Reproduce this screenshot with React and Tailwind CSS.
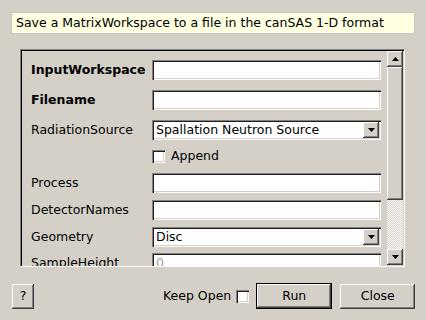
import React from 'react'

const raised = 'shadow-[inset_-1px_-1px_0_#404040,inset_1px_1px_0_#ffffff,inset_-2px_-2px_0_#808080]'
const sunken = 'shadow-[inset_1px_1px_0_#808080,inset_2px_2px_0_#202020,inset_-1px_-1px_0_#ffffff,inset_-2px_-2px_0_#d4d0c8]'

const Arrow = ({ up }) => (
  <svg width="7" height="4" viewBox="0 0 7 4">
    <path d={up ? 'M3.5 0 L7 4 L0 4 Z' : 'M0 0 L7 0 L3.5 4 Z'} fill="#000" />
  </svg>
)

const TextBox = ({ value, muted }) => (
  <div className={`w-[229px] h-[20px] bg-white ${sunken} flex items-center pl-[4px] ${muted ? 'text-[#a0a0a0]' : 'text-black'}`}>
    {value}
  </div>
)

const Combo = ({ value }) => (
  <div className={`w-[229px] h-[20px] bg-white ${sunken} flex items-center pl-[4px] pr-[2px]`}>
    <span className="flex-1">{value}</span>
    <div className={`w-[16px] h-[16px] bg-[#d4d0c8] ${raised} flex items-center justify-center`}>
      <Arrow />
    </div>
  </div>
)

const Row = ({ label, bold, children, className }) => (
  <div className={`flex items-center h-[20px] ${className}`}>
    <span className={`w-[121px] ${bold ? 'font-bold' : ''}`}>{label}</span>
    {children}
  </div>
)

const CheckBox = () => (
  <div className={`w-[13px] h-[13px] bg-white ${sunken}`} />
)

const Button = ({ label, className, isDefault }) => (
  <div className={`h-[25px] bg-[#d4d0c8] flex items-center justify-center ${isDefault ? 'border border-black' : ''} ${className}`}>
    <div className={`w-full h-full flex items-center justify-center ${raised}`}>{label}</div>
  </div>
)

export default function App() {
  return (
    <div className="w-[426px] h-[320px] bg-[#d4d0c8] text-[12.5px] text-black flex flex-col overflow-hidden" style={{ fontFamily: '"DejaVu Sans", sans-serif' }}>
      <div className="mx-[11px] mt-[12px] w-[404px] h-[22px] bg-[#ffffe1] border border-[#c8c8c0] flex items-center pl-[4px]">
        Save a MatrixWorkspace to a file in the canSAS 1-D format
      </div>

      <div className="ml-[20px] mt-[15px] w-[385px] h-[218px] border-t border-l border-[#808080] border-b border-r border-b-white border-r-white">
        <div className="w-full h-full border-t border-l border-black flex">
          <div className="flex-1 overflow-hidden pl-[9px] pt-[9px]">
            <Row label="InputWorkspace" bold><TextBox /></Row>
            <Row label="Filename" bold className="mt-[10px]"><TextBox /></Row>
            <Row label="RadiationSource" className="mt-[10px]"><Combo value="Spallation Neutron Source" /></Row>
            <div className="flex items-center h-[13px] mt-[10px] pl-[121px]">
              <CheckBox />
              <span className="ml-[6px]">Append</span>
            </div>
            <Row label="Process" className="mt-[10px]"><TextBox /></Row>
            <Row label="DetectorNames" className="mt-[7px]"><TextBox /></Row>
            <Row label="Geometry" className="mt-[7px]"><Combo value="Disc" /></Row>
            <Row label="SampleHeight" className="mt-[6px]"><TextBox value="0" muted /></Row>
          </div>
          <div className="w-[16px] flex flex-col mr-[1px] mb-[1px]">
            <div className={`h-[16px] bg-[#d4d0c8] ${raised} flex items-center justify-center`}><Arrow up /></div>
            <div className={`h-[133px] bg-[#d4d0c8] ${raised}`} />
            <div className="flex-1 bg-[repeating-conic-gradient(#ffffff_0%_25%,#d4d0c8_0%_50%)] bg-[length:2px_2px]" />
            <div className={`h-[16px] bg-[#d4d0c8] ${raised} flex items-center justify-center`}><Arrow /></div>
          </div>
        </div>
      </div>

      <div className="flex items-center mt-[16px] h-[26px]">
        <Button label="?" className="ml-[12px] w-[22px]" />
        <span className="ml-[129px]">Keep Open</span>
        <div className="ml-[5px]"><CheckBox /></div>
        <Button label="Run" isDefault className="ml-[7px] w-[76px] h-[26px]" />
        <Button label="Close" className="ml-[8px] w-[75px]" />
      </div>
    </div>
  )
}
